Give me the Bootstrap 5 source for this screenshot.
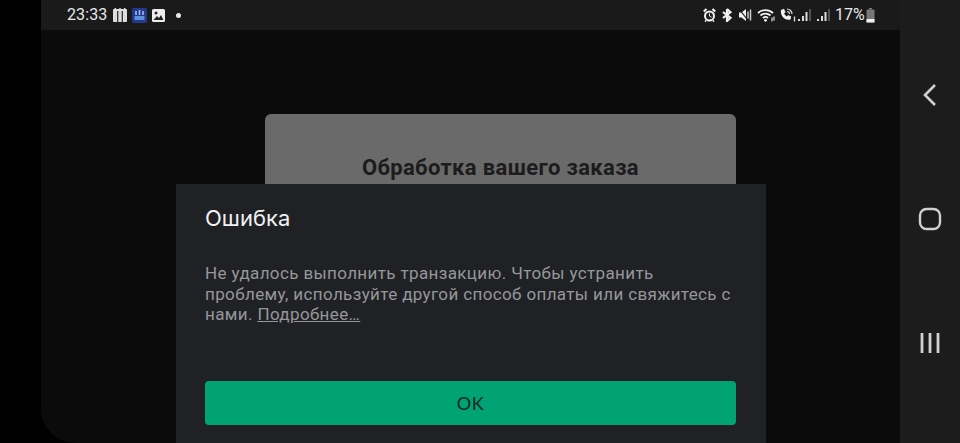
<!DOCTYPE html>
<html lang="ru">
<head>
  <meta charset="UTF-8" />
  <meta name="viewport" content="width=device-width, initial-scale=1.0" />
  <title>Ошибка</title>
  <link href="https://cdn.jsdelivr.net/npm/bootstrap@5.3.0/dist/css/bootstrap.min.css" rel="stylesheet">
  <style>
    html, body { height: 443px; overflow: hidden; }
    body { background: #000; font-family: Roboto, "Liberation Sans", sans-serif; }
    .shell { width: 960px; height: 443px; padding-left: 41px; }
    .phone { width: 859px; background: #0b0b0b; border-bottom-left-radius: 34px; overflow: hidden; }
    .status-bar { height: 30px; background: #1a1a1a; color: #e8e8e8; font-size: 16px; padding: 0 25px 0 26px; }
    .status-bar svg { display: block; }
    .clock { width: 46px; letter-spacing: .1px; }
    .left-icons { gap: 5px; }
    .right-icons { gap: 5px; }
    .dot-gap { margin-left: 6px; }
    .tight { margin-left: -3px; }
    .wide { margin-left: 1px; }
    .battery-pct { width: 29px; }
    .nav-rail { width: 60px; background: #1c1c1c; padding-top: 83px; }
    .nav-rail svg { display: block; }
    .home-key { margin-top: 100px; }
    .menu-key { margin-top: 101px; }
    .stage { flex: 1; }
    .order-card { width: 471px; height: 200px; margin: 84px 0 0 224px; background: #6a6a6a; border-radius: 6px; padding-top: 41px; }
    .order-card h2 { font-size: 22px; font-weight: 700; color: #1c1c1c; margin: 0; letter-spacing: .36px; }
    .err-dialog { position: absolute; left: 176px; top: 184px; width: 590px; height: 259px; background: #202125; padding: 22px 30px 0 29px; }
    .err-dialog h1 { font-family: Inter, sans-serif; font-size: 22px; font-weight: 400; color: #f1f1f2; margin: 0 0 33px; line-height: 24px; }
    .err-dialog p { font-size: 17px; line-height: 20.5px; letter-spacing: .37px; color: #96979a; margin: 0; width: 531px; }
    .err-dialog a { color: #96979a; }
    .ok-btn { position: absolute; left: 29px; top: 197px; width: 531px; height: 44px; background: #01a374; border: 0; border-radius: 4px; color: #14281f; font-family: Lato, sans-serif; font-size: 18px; letter-spacing: .6px; padding-top: 7px; }
    .ok-btn:hover { background: #01a374; color: #14281f; }
  </style>
</head>
<body>
  <div class="shell d-flex">
    <div class="phone d-flex flex-column">
      <!-- status bar -->
      <div class="status-bar d-flex align-items-center flex-shrink-0">
        <span class="clock">23:33</span>
        <div class="left-icons d-flex align-items-center">
          <svg width="14" height="14" viewBox="0 0 14 14"><rect y="1" width="14" height="13" rx="1" fill="#ddd"/><path d="M4.700 3v11M9.300 3v11" stroke="#333" stroke-width="1.300"/><path d="M2.300 0v3M7 0v3M11.700 0v3" stroke="#ddd" stroke-width="1.500"/></svg>
          <svg width="15" height="15" viewBox="0 0 15 15"><rect width="15" height="15" rx="2" fill="#223a8c"/><path d="M2.500 8h10v4h-10z" fill="#5d8fe0"/><path d="M4 3v4M7.500 2v5M11 3v4" stroke="#a9c2f2" stroke-width="1.500" fill="none"/></svg>
          <svg width="13" height="13" viewBox="0 0 13 13"><rect width="13" height="13" rx="1.500" fill="#eee"/><circle cx="4" cy="4" r="1.500" fill="#222"/><path d="M1.500 11l3.500-4 2 2 2-3 2.500 5z" fill="#222"/></svg>
          <svg class="dot-gap" width="5" height="5" viewBox="0 0 5 5"><circle cx="2.500" cy="2.500" r="2.500" fill="#e8e8e8"/></svg>
        </div>
        <div class="right-icons d-flex align-items-center ms-auto">
          <!-- alarm -->
          <svg width="13" height="14" viewBox="0 0 13 14"><circle cx="6.500" cy="8" r="4.500" fill="#222" stroke="#f2f2f2" stroke-width="2"/><path d="M6.500 5.500V8l2 1.200" stroke="#f2f2f2" fill="none"/><path d="M.8 3.500 3.500 1M12.200 3.500 9.500 1" stroke="#f2f2f2" stroke-width="2.200"/><path d="M3 12.500l-1 1.200M10 12.500l1 1.200" stroke="#f2f2f2" stroke-width="1.500"/></svg>
          <!-- bluetooth -->
          <svg width="12" height="14" viewBox="0 0 12 14"><path d="M6 1v12l3.500-3.200L2 4M6 1l3.500 3.200L2 10" fill="none" stroke="#f2f2f2" stroke-width="2.200"/></svg>
          <!-- mute -->
          <svg class="wide" width="13" height="14" viewBox="0 0 13 14"><path d="M0 4.500h2.500L7 1v12L2.500 9.500H0z" fill="#f2f2f2"/><path d="M0 1 10 13.500" stroke="#1a1a1a" stroke-width="1.200"/><path d="M9 3.500v7M11.500 1.500v11" stroke="#ccc" stroke-width="1.500"/></svg>
          <!-- wifi -->
          <svg width="18" height="14" viewBox="0 0 18 14"><path d="M1 5a11 11 0 0 1 15 0M3.500 7.500a7.500 7.500 0 0 1 10 0M6 10a3.700 3.700 0 0 1 5 0" fill="none" stroke="#f2f2f2" stroke-width="1.800"/><circle cx="8.500" cy="12.300" r="1.400" fill="#f2f2f2"/><path d="M15 9.500v4M17 8.500v4" stroke="#ddd" stroke-width="1.200"/></svg>
          <!-- volte call -->
          <svg width="16" height="14" viewBox="0 0 16 14"><path d="M1 2 4 .8l1.500 3.400-1.500 1.300a7 7 0 0 0 3 3L8.200 7l3 1.400-.7 3C5 13 0 8 1 2z" fill="#f2f2f2"/><path d="M7 1a5 5 0 0 1 5 5M7 3.500A2.500 2.500 0 0 1 9.500 6" stroke="#ddd" stroke-width="1.200" fill="none"/><path d="M14.500 8.500v5" stroke="#ddd" stroke-width="1.300"/></svg>
          <!-- signal 1 -->
          <svg class="tight" width="13" height="14" viewBox="0 0 13 14"><path d="M1 13v-2M5 13V8M8.500 13V4" stroke-width="2" fill="none" stroke="#ddd"/><path d="M12 13V1" stroke-width="1.500" fill="none" stroke="#666"/></svg>
          <!-- signal 2 -->
          <svg class="wide" width="13" height="14" viewBox="0 0 13 14"><path d="M1 13v-2M5 13V8M8.500 13V4" stroke-width="2" fill="none" stroke="#ddd"/><path d="M12 13V1" stroke-width="1.500" fill="none" stroke="#666"/></svg>
          <span class="battery-pct">17%</span>
          <!-- battery -->
          <svg class="tight" width="9" height="15" viewBox="0 0 9 15"><path d="M3 0h3v1.500H3z" fill="#777"/><rect x="0.500" y="1.500" width="8" height="13" rx="1" fill="#777"/><rect x="0.500" y="11" width="8" height="3.500" fill="#eee"/></svg>
        </div>
      </div>
      <!-- page behind the error dialog -->
      <div class="stage">
        <div class="order-card text-center">
          <h2>Обработка вашего заказа</h2>
        </div>
      </div>
    </div>
    <!-- android nav -->
    <div class="nav-rail d-flex flex-column align-items-center flex-shrink-0">
      <svg width="16" height="24" viewBox="0 0 16 24"><path d="M13 2 3 12l10 10" fill="none" stroke="#d0d0d0" stroke-width="2.600"/></svg>
      <svg class="home-key" width="24" height="24" viewBox="0 0 24 24"><rect x="2" y="2" width="20" height="20" rx="6.500" fill="none" stroke="#d0d0d0" stroke-width="2.400"/></svg>
      <svg class="menu-key" width="22" height="22" viewBox="0 0 22 22"><path d="M3 1v20M11 1v20M19 1v20" stroke="#d0d0d0" stroke-width="2.800"/></svg>
    </div>
  </div>
  <!-- error dialog -->
  <div class="err-dialog">
    <h1>Ошибка</h1>
    <p>Не удалось выполнить транзакцию. Чтобы устранить проблему, используйте другой способ оплаты или свяжитесь с нами. <a href="#">Подробнее…</a></p>
    <button class="btn ok-btn" type="button">OK</button>
  </div>
  <script src="https://cdn.jsdelivr.net/npm/bootstrap@5.3.0/dist/js/bootstrap.bundle.min.js"></script>
</body>
</html>
